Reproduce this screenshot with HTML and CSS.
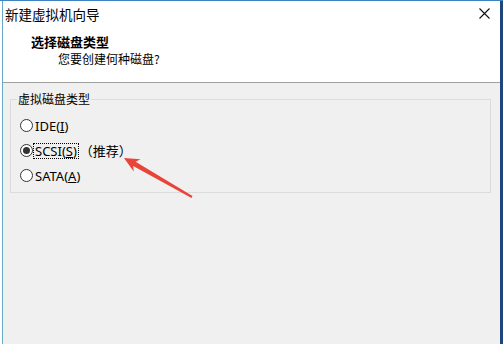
FILE: index.html
```html
<!DOCTYPE html>
<html>
<head>
<meta charset="utf-8">
<link rel="stylesheet" href="styles.css">
</head>
<body>
<div class="window">
  <div class="frame">
    <div class="titlebar">
      <span class="title">新建虚拟机向导</span>
      <svg class="close" width="11" height="11" viewBox="0 0 11 11"><path d="M0.5 0.5 L10.5 10.5 M10.5 0.5 L0.5 10.5" stroke="#111" stroke-width="1.1" fill="none"/></svg>
    </div>
    <div class="header">
      <div class="h-title">选择磁盘类型</div>
      <div class="h-sub">您要创建何种磁盘?</div>
    </div>
    <div class="sep"></div>
    <div class="body">
      <fieldset class="group">
        <legend class="legend">虚拟磁盘类型</legend>
        <div class="row"><span class="radio"></span><span class="label">IDE(<u>I</u>)</span></div>
        <div class="row"><span class="radio checked"></span><span class="label focus">SCSI(<u>S</u>)</span><span class="note">（推荐）</span></div>
        <div class="row"><span class="radio"></span><span class="label">SATA(<u>A</u>)</span></div>
      </fieldset>
    </div>
  </div>
  <svg class="arrow" width="503" height="344" viewBox="0 0 503 344">
    <polygon points="124,158 140.5,159.3 135.6,161.7 192.5,196.1 191.5,197.9 133.2,166.1 133.7,171.5" fill="#e8443a"/>
  </svg>
</div>
</body>
</html>
```

FILE: styles.css
```css
html, body {
  margin: 0;
  padding: 0;
}
body {
  width: 503px;
  height: 344px;
  overflow: hidden;
  background: #ffffff;
  font-family: "Noto Sans", "Noto Sans CJK SC", sans-serif;
  color: #000;
}
.window {
  position: relative;
  width: 503px;
  height: 344px;
  box-sizing: border-box;
  padding-left: 2px;
  border-top: 1px solid #3c82c4;
  background: #ffffff;
}
.frame {
  height: 100%;
  box-sizing: border-box;
  border-left: 1px solid #68a9c6;
  border-right: 3px solid #1d467c;
  display: flex;
  flex-direction: column;
  background: #f0f0f0;
}
.titlebar {
  height: 27px;
  background: #ffffff;
  display: flex;
  align-items: center;
  justify-content: space-between;
  padding: 0 10px 0 2px;
}
.title {
  font-family: "Noto Sans CJK SC", sans-serif;
  font-size: 13.5px;
  line-height: 27px;
}
.close {
  display: block;
  margin-top: -2px;
}
.header {
  height: 54px;
  background: #ffffff;
  box-sizing: border-box;
  padding-top: 6px;
}
.h-title {
  font-family: "Noto Sans CJK SC", sans-serif;
  font-weight: 700;
  font-size: 13px;
  line-height: 16px;
  padding-left: 28px;
}
.h-sub {
  font-family: "Noto Sans CJK SC", sans-serif;
  font-size: 12px;
  line-height: 16px;
  margin-top: 1px;
  padding-left: 55px;
}
.sep {
  height: 1px;
  background: #a0a0a0;
}
.body {
  flex: 1;
  background: #f0f0f0;
}
.group {
  margin: 9px 9px 0 7px;
  padding: 7px 9px 4px 9px;
  border: 1px solid #dcdcdc;
  min-inline-size: 0;
}
.legend {
  font-family: "Noto Sans CJK SC", sans-serif;
  font-size: 12px;
  line-height: 14px;
  padding: 0 1px;
  margin-left: -3px;
}
.row {
  height: 25px;
  display: flex;
  align-items: center;
}
.radio {
  width: 13px;
  height: 13px;
  box-sizing: border-box;
  border: 1px solid #333;
  border-radius: 50%;
  background: #fff;
  display: flex;
  align-items: center;
  justify-content: center;
}
.radio.checked::after {
  content: "";
  width: 7px;
  height: 7px;
  border-radius: 50%;
  background: #333;
}
.label {
  font-size: 13px;
  line-height: 12px;
  padding: 1px;
  border: 1px solid transparent;
}
.label u {
  text-underline-offset: 1px;
}
.label.focus {
  border: 1px dotted #000;
}
.note {
  font-family: "Noto Sans CJK SC", sans-serif;
  font-size: 13px;
  line-height: 14px;
  margin-left: 1px;
}
.arrow {
  position: absolute;
  left: 0;
  top: -1px;
  pointer-events: none;
}
```
